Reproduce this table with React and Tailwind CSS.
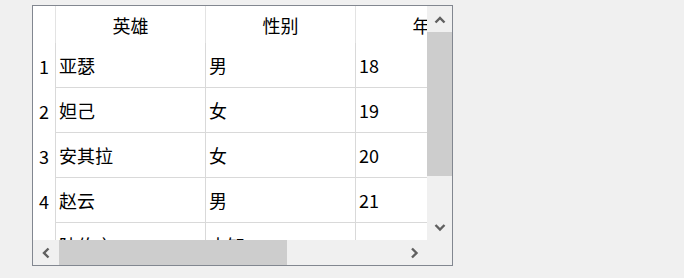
import React from "react";

const columns = ["英雄", "性别", "年龄"];
const rows = [
  ["亚瑟", "男", "18"],
  ["妲己", "女", "19"],
  ["安其拉", "女", "20"],
  ["赵云", "男", "21"],
  ["陆伯言", "未知", "22"],
];

function Chevron({ dir }) {
  const paths = {
    up: "M1.5 6.5 L6 2 L10.5 6.5",
    down: "M1.5 2 L6 6.5 L10.5 2",
    left: "M6.5 1.5 L2 6 L6.5 10.5",
    right: "M2 1.5 L6.5 6 L2 10.5",
  };
  const vertical = dir === "up" || dir === "down";
  return (
    <svg
      width={vertical ? 12 : 9}
      height={vertical ? 9 : 12}
      viewBox={vertical ? "0 0 12 9" : "0 0 9 12"}
      fill="none"
    >
      <path d={paths[dir]} stroke="#606060" strokeWidth="2.4" />
    </svg>
  );
}

export default function App() {
  return (
    <div
      className="w-[684px] h-[278px] bg-[#f0f0f0] pl-[32px] pt-[5px]"
      style={{ fontFamily: '"Noto Sans CJK SC", "Noto Sans", sans-serif' }}
    >
      <div className="w-[421px] h-[261px] border border-[#828790] grid grid-cols-[394px_25px] grid-rows-[234px_25px]">
        {/* table viewport */}
        <div className="bg-white overflow-hidden">
          <div className="w-[473px] flex flex-col text-[18px] leading-none text-black">
            <div className="flex h-[37px]">
              <div className="w-[23px] shrink-0 border-r border-[#e3e3e3]" />
              {columns.map((c) => (
                <div
                  key={c}
                  className="w-[150px] shrink-0 border-r border-[#e3e3e3] flex items-center justify-center pt-[1px]"
                >
                  {c}
                </div>
              ))}
            </div>
            {rows.map((r, i) => (
              <div key={i} className="flex h-[45px]">
                <div className="w-[23px] shrink-0 border-r border-[#d9d9d9] flex items-center justify-center">
                  {i + 1}
                </div>
                {r.map((v, j) => (
                  <div
                    key={j}
                    className="w-[150px] shrink-0 border-r border-b border-[#d9d9d9] flex items-center pl-[3px]"
                  >
                    {v}
                  </div>
                ))}
              </div>
            ))}
          </div>
        </div>

        {/* vertical scrollbar */}
        <div className="bg-[#f0f0f0] flex flex-col">
          <div className="h-[26px] flex items-center justify-center pt-[3px]">
            <Chevron dir="up" />
          </div>
          <div className="h-[144px] bg-[#cdcdcd]" />
          <div className="flex-1" />
          <div className="h-[26px] flex items-center justify-center">
            <Chevron dir="down" />
          </div>
        </div>

        {/* horizontal scrollbar */}
        <div className="bg-[#f0f0f0] flex">
          <div className="w-[26px] flex items-center justify-center">
            <Chevron dir="left" />
          </div>
          <div className="w-[228px] bg-[#cdcdcd]" />
          <div className="flex-1" />
          <div className="w-[26px] flex items-center justify-center">
            <Chevron dir="right" />
          </div>
        </div>

        {/* corner */}
        <div className="bg-[#f0f0f0]" />
      </div>
    </div>
  );
}
